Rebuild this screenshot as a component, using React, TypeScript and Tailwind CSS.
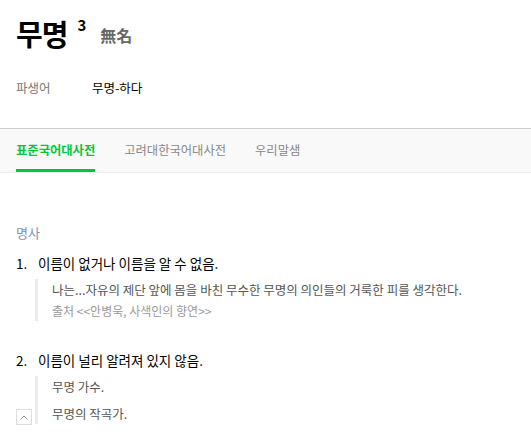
export default function App() {
  const font = { fontFamily: '"Noto Sans CJK KR", "Noto Sans", sans-serif' };
  return (
    <div className="w-[531px] h-[448px] bg-white overflow-hidden text-[#222]" style={font}>
      {/* Entry header */}
      <div className="px-4 pt-[14px]">
        <div className="flex items-start">
          <h1 className="text-[29px] leading-[38px] font-bold text-black tracking-[-1px]">무명</h1>
          <sup className="ml-[10px] mt-[2px] text-[15px] leading-[18px] font-bold text-black top-0">3</sup>
          <span className="ml-[14px] mt-[10px] text-[16px] leading-[22px] font-bold text-[#666]">無名</span>
        </div>
        <div className="flex mt-[27px] text-[12.5px] leading-[18px]">
          <span className="w-[76px] text-[#777]">파생어</span>
          <span className="text-black">무명-하다</span>
        </div>
      </div>

      {/* Dictionary tabs */}
      <div className="mt-[31px] border-t border-[#ccc] bg-[#f9f9f9] border-b border-b-[#eee] h-[45px] px-4 flex items-end gap-[29px] text-[12.3px]">
        <div className="h-full flex items-center font-bold text-[#00c73c] border-b-[3px] border-[#00c73c] pt-[3px]">
          표준국어대사전
        </div>
        <div className="h-full flex items-center text-[#888] border-b-[3px] border-transparent pt-[3px]">
          고려대한국어대사전
        </div>
        <div className="h-full flex items-center text-[#888] border-b-[3px] border-transparent pt-[3px]">
          우리말샘
        </div>
      </div>

      {/* Senses */}
      <div className="px-4 pt-[51px]">
        <div className="text-[13px] leading-[18px] text-[#7f93b4]">명사</div>

        <div className="mt-[11px] flex text-[13.5px] leading-[20px] text-black">
          <span className="w-[22px]">1.</span>
          <span>이름이 없거나 이름을 알 수 없음.</span>
        </div>
        <div className="ml-[19px] mt-[6px] border-l-[3px] border-[#ebebeb] pl-[14px] pt-[1px] pb-[1px]">
          <p className="text-[12.5px] leading-[20px] text-[#555]">
            나는...자유의 제단 앞에 몸을 바친 무수한 무명의 의인들의 거룩한 피를 생각한다.
          </p>
          <p className="mt-[2px] text-[12px] leading-[18px] text-[#999]">출처 &lt;&lt;안병욱, 사색인의 향연&gt;&gt;</p>
        </div>

        <div className="mt-[29px] flex text-[13.5px] leading-[20px] text-black">
          <span className="w-[22px]">2.</span>
          <span>이름이 널리 알려져 있지 않음.</span>
        </div>
        <div className="relative ml-[19px] mt-[6px] border-l-[3px] border-[#ebebeb] pl-[14px] pt-[1px]">
          <p className="text-[12.5px] leading-[20px] text-[#555]">무명 가수.</p>
          <p className="mt-[7px] text-[12.5px] leading-[20px] text-[#555]">무명의 작곡가.</p>
          <button className="absolute left-[-22px] bottom-[-1px] w-[16px] h-[16px] border border-[#ddd] bg-white flex items-center justify-center">
            <svg width="8" height="5" viewBox="0 0 8 5" fill="none">
              <path d="M0.5 4.5L4 1L7.5 4.5" stroke="#999" strokeWidth="1" />
            </svg>
          </button>
        </div>
      </div>
    </div>
  );
}
